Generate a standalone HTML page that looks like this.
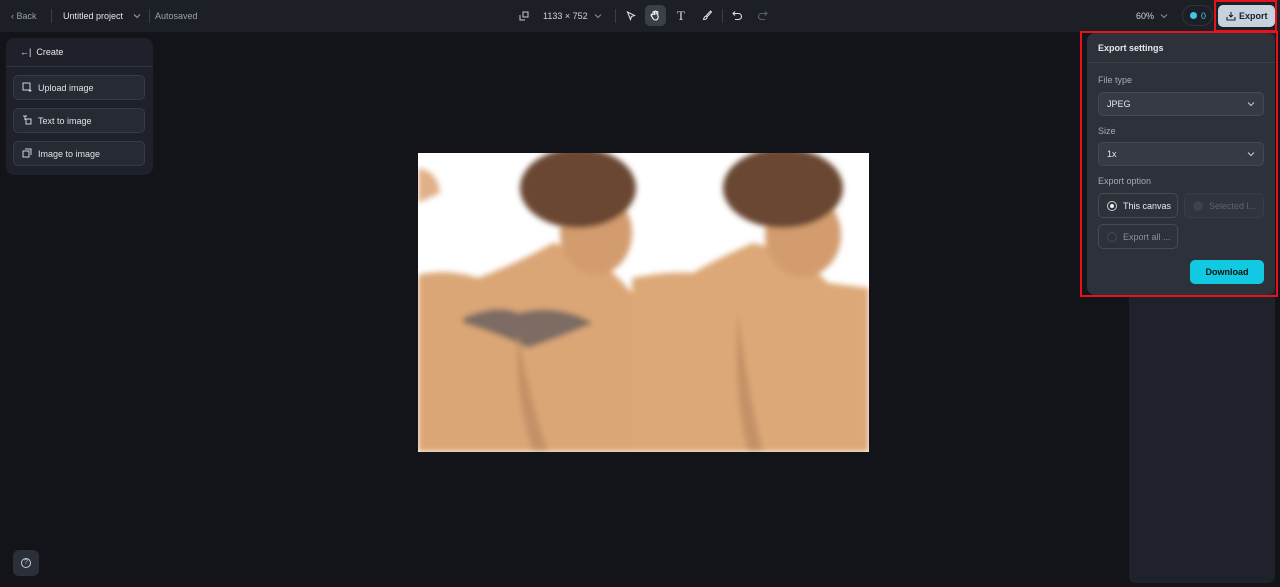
<!DOCTYPE html>
<html><head><meta charset="utf-8"><style>
*{box-sizing:border-box;margin:0;padding:0}
body{width:1280px;height:587px;overflow:hidden;background:#121419;font-family:"Liberation Sans",sans-serif;color:#e6e8eb;position:relative}
.top{position:absolute;left:0;top:0;width:1280px;height:32px;background:#1c1f26}
.t{position:absolute;font-size:9px;white-space:nowrap}
.sep{position:absolute;top:9px;width:1px;height:14px;background:#3a3e47}
.panel{position:absolute;left:6px;top:38px;width:147px;height:137px;background:#1e2129;border-radius:8px}
.btn{position:absolute;left:7px;width:132px;height:25px;background:#262a33;border:1px solid #353a44;border-radius:5px;font-size:9px;color:#dfe2e6;padding:7px 0 0 24px}
.btn svg{position:absolute;left:8px;top:6px}
.rp{position:absolute;left:1129px;top:32px;width:146px;height:551px;background:#1f222a;border-radius:0 0 7px 7px}
.ex{position:absolute;left:1087px;top:33px;width:188px;height:262px;background:#2d313a;border-radius:8px}
.red{position:absolute;border:2px solid #e5141c}
.sel{position:absolute;left:11px;width:166px;height:24px;background:#353a44;border:1px solid #434854;border-radius:5px;font-size:9px;padding:6px 0 0 8px;color:#e6e8eb}
.lab{position:absolute;left:11px;font-size:9px;color:#a5aab3}
.opt{position:absolute;height:25px;border:1px solid #454a55;border-radius:5px;font-size:9px;padding:7px 0 0 24px}
.rad{position:absolute;left:8px;top:7px;width:10px;height:10px;border-radius:50%;border:1px solid #6b707a}
</style></head><body>
<div class="top"></div>
<div class="t" style="left:11px;top:11px;color:#9aa0a9">‹ Back</div>
<div class="sep" style="left:51px"></div>
<div class="t" style="left:63px;top:11px;color:#e6e8eb">Untitled project</div>
<svg style="position:absolute;left:133px;top:13px" width="8" height="6" viewBox="0 0 8 6" fill="none" stroke="#9aa0a9"><path d="M1 1.5l3 3 3-3"/></svg>
<div class="sep" style="left:149px"></div>
<div class="t" style="left:155px;top:11px;color:#9aa0a9">Autosaved</div>
<svg style="position:absolute;left:519px;top:11px" width="10" height="10" viewBox="0 0 10 10" fill="none" stroke="#c8ccd2" stroke-width="1"><rect x="4" y="1" width="5" height="5"/><path d="M1 4v5h5"/></svg>
<div class="t" style="left:543px;top:11px;color:#d0d3d8">1133 × 752</div>
<svg style="position:absolute;left:594px;top:13px" width="8" height="6" viewBox="0 0 8 6" fill="none" stroke="#8a8f98"><path d="M1 1.5l3 3 3-3"/></svg>
<div class="sep" style="left:615px"></div>
<svg style="position:absolute;left:626px;top:11px" width="10" height="10" viewBox="0 0 10 10" fill="none" stroke="#d8dbe0" stroke-width="1.1"><path d="M1.5 1l7 3.5-3 1-1 3z"/></svg>
<div style="position:absolute;left:645px;top:5px;width:21px;height:21px;background:#3a3f49;border-radius:5px"></div>
<svg style="position:absolute;left:650px;top:10px" width="11" height="11" viewBox="0 0 11 11" fill="none" stroke="#fff" stroke-width="1.1"><path d="M3 5V2.5a.8.8 0 0 1 1.6 0V5M4.6 4.5V1.8a.8.8 0 0 1 1.6 0v2.7M6.2 4.5V2.3a.8.8 0 0 1 1.6 0V6M3 5L2.2 4.4a.8.8 0 0 0-1 1.2L3 8.5c.6.9 1.5 1.5 2.6 1.5 1.5 0 2.5-1.2 2.5-2.7V6"/></svg>
<div class="t" style="left:677px;top:8px;font-size:13px;font-family:'Liberation Serif',serif;color:#d8dbe0">T</div>
<svg style="position:absolute;left:702px;top:10px" width="10" height="11" viewBox="0 0 10 11" fill="none" stroke="#d8dbe0" stroke-width="1.1"><path d="M8.5 1L4 6l1 1 4.5-5zM4 6.2C2.5 6.2 2 7.5 1.5 9.5c2 0 3.5-.5 3.5-2.3"/></svg>
<div class="sep" style="left:722px"></div>
<svg style="position:absolute;left:732px;top:10px" width="11" height="11" viewBox="0 0 11 11" fill="none" stroke="#d8dbe0" stroke-width="1.1"><path d="M3 1.5L1 3.5l2 2M1 3.5h5.5a3 3 0 0 1 0 6H3"/></svg>
<svg style="position:absolute;left:757px;top:10px" width="11" height="11" viewBox="0 0 11 11" fill="none" stroke="#5a5f68" stroke-width="1.1"><path d="M8 1.5l2 2-2 2M10 3.5H4.5a3 3 0 0 0 0 6H8"/></svg>
<div class="t" style="left:1136px;top:11px;color:#d0d3d8">60%</div>
<svg style="position:absolute;left:1160px;top:13px" width="8" height="6" viewBox="0 0 8 6" fill="none" stroke="#8a8f98"><path d="M1 1.5l3 3 3-3"/></svg>
<div style="position:absolute;left:1182px;top:5px;width:31px;height:21px;border:1px solid #30343c;border-radius:11px"></div>
<div style="position:absolute;left:1190px;top:12px;width:7px;height:7px;border-radius:50%;background:#3ec8e6"></div>
<div class="t" style="left:1201px;top:11px;color:#3ec8e6">0</div>
<div style="position:absolute;left:1218px;top:5px;width:57px;height:22px;background:#c6d3de;border-radius:5px"></div>
<svg style="position:absolute;left:1226px;top:11px" width="10" height="10" viewBox="0 0 10 10" fill="none" stroke="#1c1f26" stroke-width="1.1"><path d="M5 1v5M3 4l2 2 2-2M1 6v3h8V6"/></svg>
<div class="t" style="left:1239px;top:11px;color:#1c1f26;font-weight:bold">Export</div>
<div class="red" style="left:1214px;top:0;width:63px;height:32px"></div>

<div class="panel">
<div class="t" style="left:14px;top:9px;font-size:9px;color:#e6e8eb">←| &nbsp;Create</div>
<div style="position:absolute;left:0;top:28px;width:147px;height:1px;background:#30343d"></div>
<div class="btn" style="top:37px"><svg width="10" height="10" viewBox="0 0 10 10" fill="none" stroke="#d0d3d8"><rect x="1" y="1" width="7" height="7"/><path d="M8 7v3M6.5 8.5h3"/></svg>Upload image</div>
<div class="btn" style="top:70px"><svg width="10" height="10" viewBox="0 0 10 10" fill="none" stroke="#d0d3d8"><path d="M1 1h4M3 1v4"/><rect x="4" y="4" width="5" height="5"/></svg>Text to image</div>
<div class="btn" style="top:103px"><svg width="10" height="10" viewBox="0 0 10 10" fill="none" stroke="#d0d3d8"><rect x="1" y="3" width="6" height="6"/><path d="M3 1h6v6"/></svg>Image to image</div>
</div>

<svg style="position:absolute;left:418px;top:153px" width="451" height="299" viewBox="0 0 451 299">
<defs><filter id="b"><feGaussianBlur stdDeviation="3"/></filter><clipPath id="c"><rect width="451" height="299"/></clipPath></defs>
<rect width="451" height="299" fill="#fff"/>
<g filter="url(#b)" clip-path="url(#c)">
<path d="M0 122 Q30 115 60 125 Q100 110 135 90 L175 100 L205 130 L214 140 L214 299 L0 299z" fill="#dba676"/>
<ellipse cx="178" cy="80" rx="36" ry="42" fill="#d39c6e"/>
<ellipse cx="160" cy="35" rx="58" ry="40" fill="#6b4631"/>
<path d="M0 15 Q20 18 22 40 L0 50z" fill="#e0b088"/>
<path d="M45 165 Q80 150 100 160 Q140 150 175 170 Q140 185 110 195 Q80 180 45 170z" fill="#6a6262" opacity=".85"/>
<path d="M214 125 Q250 118 275 120 Q300 105 335 90 L380 100 L410 130 L451 135 L451 299 L214 299z" fill="#dca877"/>
<ellipse cx="385" cy="82" rx="38" ry="42" fill="#d39c6e"/>
<ellipse cx="365" cy="35" rx="60" ry="40" fill="#6b4631"/>
<path d="M100 180 Q110 240 130 299 L115 299 Q95 240 100 180z" fill="#c49066"/>
<path d="M320 160 Q330 240 345 299 L330 299 Q315 240 320 160z" fill="#c49066"/>
</g>
</svg>

<div class="rp"></div>
<div class="ex">
<div class="t" style="left:11px;top:10px;color:#e6e8eb;font-weight:bold">Export settings</div>
<div style="position:absolute;left:0;top:29px;width:188px;height:1px;background:#3c414b"></div>
<div class="lab" style="top:42px">File type</div>
<div class="sel" style="top:59px">JPEG<svg style="position:absolute;right:8px;top:8px" width="8" height="6" viewBox="0 0 8 6" fill="none" stroke="#ccc"><path d="M1 1.5l3 3 3-3"/></svg></div>
<div class="lab" style="top:93px">Size</div>
<div class="sel" style="top:109px">1x<svg style="position:absolute;right:8px;top:8px" width="8" height="6" viewBox="0 0 8 6" fill="none" stroke="#ccc"><path d="M1 1.5l3 3 3-3"/></svg></div>
<div class="lab" style="top:143px">Export option</div>
<div class="opt" style="left:11px;top:160px;width:80px;color:#e6e8eb"><div class="rad" style="border-color:#ccc"><div style="position:absolute;left:2px;top:2px;width:4px;height:4px;border-radius:50%;background:#eee"></div></div>This canvas</div>
<div class="opt" style="left:97px;top:160px;width:80px;color:#5e636c;border-color:#393d47;background:#30343d"><div class="rad" style="border:none;background:#3e424b"></div>Selected l...</div>
<div class="opt" style="left:11px;top:191px;width:80px;color:#8a8f98"><div class="rad" style="border-color:#444953"></div>Export all ...</div>
<div style="position:absolute;left:103px;top:227px;width:74px;height:24px;background:#11c9e0;border-radius:5px;font-size:9px;font-weight:bold;color:#111;text-align:center;padding-top:7px">Download</div>
</div>
<div class="red" style="left:1080px;top:31px;width:198px;height:266px"></div>

<div style="position:absolute;left:13px;top:550px;width:26px;height:26px;background:#2b2f38;border-radius:6px"></div>
<div style="position:absolute;left:21px;top:558px;width:10px;height:10px;border:1px solid #c8ccd2;border-radius:50%;font-size:7px;text-align:center;line-height:8px;color:#c8ccd2">?</div>
</body></html>
